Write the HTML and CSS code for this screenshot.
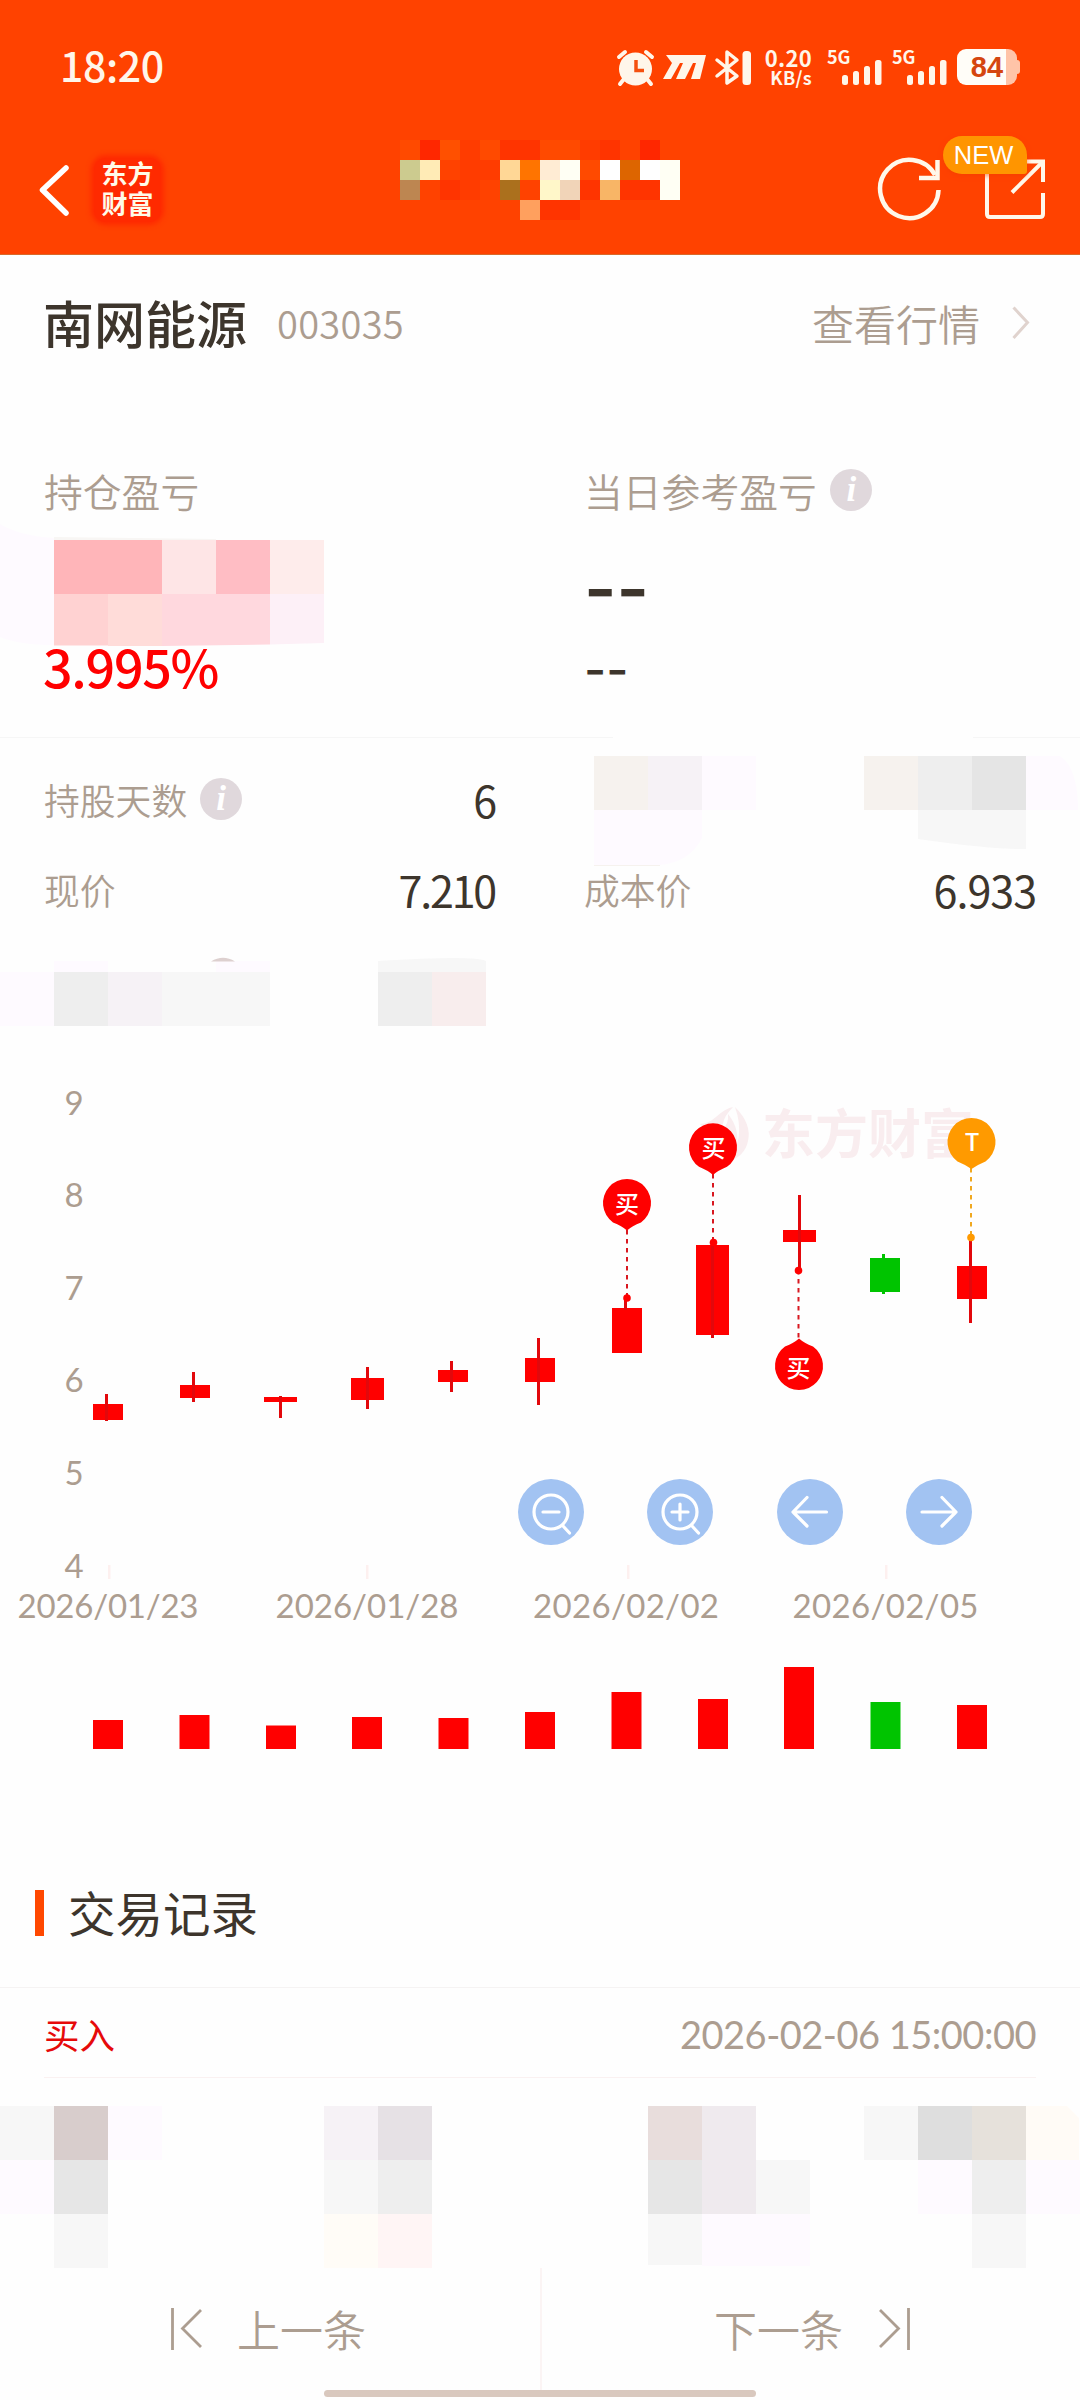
FILE: index.html
```html
<!DOCTYPE html>
<html lang="zh-CN">
<head>
<meta charset="utf-8">
<title>持仓详情</title>
<link rel="stylesheet" href="styles.css">
</head>
<body>
<main class="screen">
  <header class="header">
    <div class="status">
      <span class="clock">18:20</span>
      <div class="tray">
        <svg class="tray-icons" width="136" height="40" viewBox="617 47 136 40" fill="#fff6ea">
          <circle cx="636.500" cy="69" r="16.500"/>
          <g fill="none" stroke="#fff6ea" stroke-width="4" stroke-linecap="round">
            <path d="M620 57l6-5M653 57l-6-5M625 79l-4 5M648 79l4 5"/>
            <path d="M637 60v10.500h8" stroke="#f5500f" stroke-width="3.500" stroke-linecap="butt"/>
          </g>
          <path d="M667 55H707L701 79H692L697 63H694L686 79H677L684 63H681L672 79H664L673 63Z"/>
          <g fill="none" stroke="#fff6ea" stroke-width="3.500" stroke-linejoin="round" stroke-linecap="round">
            <path d="M718 60L738 76L728 83V52L738 60L718 76"/>
          </g>
          <rect x="743.500" y="51" width="8.500" height="34" rx="3.500"/>
        </svg>
        <div class="speed"><span class="speed-num">0.20</span><span class="speed-unit">KB/s</span></div>
        <div class="signal"><span class="net">5G</span>
          <svg width="40" height="26" viewBox="0 0 40 26" fill="#fff6ea"><rect x="0" y="15" width="6" height="10" rx="2.500"/><rect x="11" y="11" width="6" height="14" rx="2.500"/><rect x="22" y="6" width="6" height="19" rx="2.500"/><rect x="33" y="0" width="6.500" height="25" rx="2.500"/></svg>
        </div>
        <div class="signal"><span class="net">5G</span>
          <svg width="40" height="26" viewBox="0 0 40 26" fill="#fff6ea"><rect x="0" y="15" width="6" height="10" rx="2.500"/><rect x="11" y="11" width="6" height="14" rx="2.500"/><rect x="22" y="6" width="6" height="19" rx="2.500"/><rect x="33" y="0" width="6.500" height="25" rx="2.500"/></svg>
        </div>
        <div class="battery"><span>84</span></div>
      </div>
    </div>
    <nav class="navbar">
      <div class="nav-left">
        <svg width="32" height="56" viewBox="38 162 32 56" fill="none" stroke="#fff" stroke-width="5.500" stroke-linecap="round" stroke-linejoin="round"><path d="M66 168L42.500 190L66 213"/></svg>
        <div class="brand">东方<br>财富</div>
      </div>
      <svg class="title-mask" width="280" height="80" viewBox="0 0 14 4" shape-rendering="crispEdges">
        <g fill="#ff4a00"><path d="M0 0h1v1h-1zM4 0h1v1h-1zM7 0h2v1h-2zM9 1h1v1h-1z"/></g>
        <g fill="#ff3400"><path d="M5 0h2v1h-2zM10 0h1v1h-1zM2 2h1v1h-1zM9 2h1v1h-1zM11 2h2v1h-2zM7 3h2v1h-2z"/></g>
        <g fill="#ff3c00"><path d="M3 0h1v3h-1zM9 0h1v1h-1zM4 1h1v1h-1z"/></g>
        <path fill="#ff2700" d="M1 0h1v1h-1zM12 0h1v1h-1z"/>
        <path fill="#ff5000" d="M2 0h1v1h-1z"/>
        <path fill="#cccb8f" d="M0 1h1v1h-1z"/><path fill="#ffebb6" d="M1 1h1v1h-1z"/>
        <path fill="#ffd796" d="M5 1h1v1h-1z"/><path fill="#ff7400" d="M6 1h1v1h-1z"/>
        <path fill="#ffecd4" d="M7 1h1v1h-1z"/><path fill="#fffff4" d="M8 1h1v1h-1zM13 1h1v2h-1z"/>
        <path fill="#fff" d="M10 1h1v1h-1zM12 1h1v1h-1z"/><path fill="#dd6500" d="M11 1h1v1h-1z"/>
        <path fill="#bd8651" d="M0 2h1v1h-1z"/><path fill="#ab701d" d="M5 2h1v1h-1z"/>
        <path fill="#fff7c9" d="M7 2h1v1h-1z"/><path fill="#f1d4b8" d="M8 2h1v1h-1z"/>
        <path fill="#f8b566" d="M10 2h1v1h-1z"/><path fill="#ffa05e" d="M6 3h1v1h-1z"/>
      </svg>
      <div class="nav-right">
        <svg width="64" height="66" viewBox="876 156 64 66" fill="none" stroke="#fff8ea" stroke-width="4.500"><path d="M937.500 190A29.200 29.200 0 1 1 934 175"/><path d="M936.500 160V178H918"/></svg>
        <div class="share">
          <svg width="62" height="62" viewBox="985 158 62 62" fill="none" stroke="#fff8ea" stroke-width="4"><path d="M987 170V214Q987 217 990 217H1040Q1043 217 1043 214V193"/><path d="M1024 161.500H1043V182"/><path d="M1012 192.500L1042 162.500"/></svg>
          <span class="badge">NEW</span>
        </div>
      </div>
    </nav>
  </header>

  <section class="stock">
    <h1 class="stock-name">南网能源</h1>
    <span class="stock-code">003035</span>
    <a class="quote">查看行情</a>
    <svg class="quote-arrow" width="18" height="36" viewBox="0 0 18 36" fill="none" stroke="#e0d3ce" stroke-width="3"><path d="M1.500 2.500L15.500 17.500L1.500 33"/></svg>
  </section>

  <section class="pnl">
    <div class="pnl-cell">
      <div class="pnl-label">持仓盈亏</div>
      <div class="pnl-value"></div>
      <div class="pnl-rate">3.995%</div>
    </div>
    <div class="pnl-cell">
      <div class="pnl-label">当日参考盈亏 <i class="info">i</i></div>
      <div class="pnl-value dash-big">--</div>
      <div class="dash-small">--</div>
    </div>
    <svg class="mask" width="1080" height="342" viewBox="0 395 1080 342">
      <path fill="#fefaff" d="M0 524Q20 536 54 538V645Q20 645 0 637Z"/>
      <path fill="#f8f6f4" d="M54 537L216 539V541H54Z"/>
      <path fill="#ffb5b9" d="M54 540h108v54H54z"/><path fill="#fee5e6" d="M162 540h54v54h-54z"/><path fill="#ffbdc4" d="M216 540h54v54h-54z"/><path fill="#feeceb" d="M270 540h54v54h-54z"/>
      <path fill="#ffd2d2" d="M54 594h54v51.500H54z"/><path fill="#ffdcd9" d="M108 594h54v52h-54z"/><path fill="#ffd8de" d="M162 594h108v50.500l-108 1.500z"/><path fill="#fdf0f7" d="M270 594h54v49l-54 1.500z"/>
    </svg>
  </section>

  <section class="details">
    <div class="detail"><span class="detail-label">持股天数 <i class="info">i</i></span><span class="detail-value">6</span></div>
    <div class="detail"></div>
    <div class="detail"><span class="detail-label">现价</span><span class="detail-value tight">7.210</span></div>
    <div class="detail"><span class="detail-label">成本价</span><span class="detail-value">6.933</span></div>
    <svg class="mask" width="1080" height="302" viewBox="0 737 1080 302">
      <path fill="#f6f2ee" d="M594 756h54v54h-54zM864 756h54v54h-54zM594 864h66v2h-66z"/>
      <path fill="#f6f2f6" d="M648 756h54v54h-54zM108 972h54v54h-54z"/>
      <path fill="#fefaff" d="M702 756h54v54h-54zM1026 756h34Q1078 768 1078 810h-52zM594 810h108v28Q690 862 660 865H594zM0 972h54v54H0zM54 961h54v11H54zM216 961h54v11h-54z"/>
      <path fill="#eeeeee" d="M918 756h54v54h-54zM54 972h54v54H54zM378 972h54v54h-54z"/>
      <path fill="#e5e5e5" d="M972 756h54v54h-54z"/>
      <path fill="#f7f7f7" d="M918 810h108v39Q995 850 918 839zM162 972h108v54H162zM378 961Q475 955 486 961V972H378z"/>
      <path fill="#f8eded" d="M432 972h54v54h-54z"/>
      <path fill="#ddd0cf" d="M211 961.500Q223 954 235 961.500z"/>
    </svg>
  </section>

  <svg class="chart" width="1080" height="720" viewBox="0 1040 1080 720">
    <g class="wm">
      <path d="M700 1124Q708 1124 716 1117Q726 1108 733 1107Q724 1116 723 1124L712 1134ZM735 1107Q752 1124 748 1141Q745 1156 728 1162Q746 1138 735 1107ZM728 1114Q741 1130 736 1150L726 1158L722 1130Q729 1124 728 1114Z"/>
      <text x="762" y="1154" textLength="212">东方财富</text>
    </g>
    <g class="axis">
      <text x="64.500" y="1115">9</text><text x="64.500" y="1207">8</text><text x="64.500" y="1300">7</text><text x="64.500" y="1392">6</text><text x="64.500" y="1485">5</text><text x="64.500" y="1578">4</text>
      <text x="17.500" y="1618" textLength="181">2026/01/23</text><text x="275.500" y="1618" textLength="183">2026/01/28</text><text x="533" y="1618" textLength="186">2026/02/02</text><text x="792.500" y="1618" textLength="186">2026/02/05</text>
    </g>
    <path fill="#fdf0ef" d="M108 1565h2.500v14h-2.500zM366 1565h2.500v14h-2.500zM627 1565h2.500v14h-2.500zM885 1565h2.500v14h-2.500z"/>
    <g class="up">
      <path d="M93 1404h30v16H93zM180 1385h30v13h-30zM264 1397h33v5h-33zM351 1378h33v22h-33zM438 1370h30v12h-30zM525 1358h30v24h-30zM612 1308h30v45h-30zM696 1245h33v90h-33zM783 1230h33v12h-33zM957 1266h30v33h-30z"/>
      <path class="wick" d="M106.500 1394v27M193.500 1372v30M280.500 1396v22M367.500 1367v42M451.500 1361v31M538.500 1338v67M625.500 1298v12M712.500 1243v95M799.500 1195v75M970.500 1240v83"/>
    </g>
    <g class="down"><path d="M870 1258h30v34h-30z"/><path class="wick" d="M883.500 1254v40"/></g>

    <g class="pin">
      <path class="lead" d="M627 1230V1298M713 1174V1242M798.500 1270V1339"/>
      <circle cx="627" cy="1298" r="3.800"/><circle cx="713.500" cy="1242.500" r="3.800"/><circle cx="798.500" cy="1270.500" r="3.800"/>
      <path d="M627 1230.500Q622 1226 613 1222.500A24 24 0 1 1 641 1222.500Q632 1226 627 1230.500Z"/>
      <path d="M713 1175Q708 1170.500 699 1166.800A24 24 0 1 1 727 1166.800Q718 1170.500 713 1175Z"/>
      <path d="M799 1338.500Q804 1343 813 1346.500A24 24 0 1 1 785 1346.500Q794 1343 799 1338.500Z"/>
      <text x="627" y="1213">买</text><text x="713.500" y="1157">买</text><text x="798.500" y="1377">买</text>
    </g>
    <g class="pin tpin">
      <path class="lead" d="M971 1168V1237"/><circle cx="971" cy="1237.500" r="3.800"/>
      <path d="M971.500 1169Q966 1165 957.500 1161.500A24 24 0 1 1 985.500 1161.500Q977 1165 971.500 1169Z"/>
      <text x="972" y="1151">T</text>
    </g>

    <g fill="#a2c3f2"><circle cx="551" cy="1512" r="33"/><circle cx="680" cy="1512" r="33"/><circle cx="810" cy="1512" r="33"/><circle cx="939" cy="1512" r="33"/></g>
    <g fill="none" stroke="#fff" stroke-width="3.200" stroke-linecap="round" stroke-linejoin="round">
      <circle cx="551" cy="1512" r="17"/><path d="M563 1526L569.500 1533M543 1512h16"/>
      <circle cx="680" cy="1512" r="17"/><path d="M692 1526L698.500 1533M672 1512h16M680 1504v16"/>
      <path d="M826.500 1512H793M807 1497.500L793 1512L807 1526"/>
      <path d="M922 1512H956M942 1497.500L956 1512L942 1526"/>
    </g>

    <g class="up"><path d="M93 1720h30v29H93zM179.500 1715h30v34h-30zM266 1725.500h30v23.500h-30zM352 1717h30v32h-30zM438.500 1718h30v31h-30zM525 1712h30v37h-30zM611.500 1692h30v57h-30zM698 1699h30v50h-30zM784 1667h30v82h-30zM957 1705h30v44h-30z"/></g>
    <g class="down"><path d="M870.500 1702h30v47h-30z"/></g>
  </svg>

  <section class="records">
    <h2 class="records-title">交易记录</h2>
    <div class="record-head"><span class="side">买入</span><time class="time">2026-02-06 15:00:00</time></div>
    <svg class="record-mask" width="1080" height="190" viewBox="0 2078 1080 190">
      <path fill="#f7f7f7" d="M0 2106h54v54H0zM864 2106h54v54h-54zM324 2160h54v54h-54zM756 2160h54v54h-54zM54 2214h54v54H54zM648 2214h54v51h-54zM972 2214h54v54h-54z"/>
      <path fill="#fefaff" d="M108 2106h54v54h-54zM0 2160h54v54H0zM918 2160h54v54h-54zM1026 2160h54v54h-54zM702 2214h108v52H702z"/>
      <path fill="#d8cdcc" d="M54 2106h54v54H54z"/><path fill="#f6f2f6" d="M324 2106h54v54h-54z"/><path fill="#e6e1e5" d="M378 2106h54v54h-54z"/>
      <path fill="#e8dddc" d="M648 2106h54v54h-54z"/><path fill="#efeaee" d="M702 2106h54v108h-54z"/><path fill="#dedede" d="M918 2106h54v54h-54z"/>
      <path fill="#e6e1db" d="M972 2106h54v54h-54z"/><path fill="#fffbf6" d="M1026 2106h41l12 12v42h-53z"/>
      <path fill="#e6e6e6" d="M54 2160h54v54H54zM648 2160h54v54h-54z"/><path fill="#eeeeee" d="M378 2160h54v54h-54zM972 2160h54v54h-54z"/>
      <path fill="#fffcf7" d="M324 2214h54v54h-54z"/><path fill="#fff5f5" d="M378 2214h54v54h-54z"/>
    </svg>
  </section>

  <footer class="pager">
    <div class="page-link">
      <svg width="34" height="44" viewBox="170 2307 34 44" fill="none" stroke="#ac9d90" stroke-width="2.800"><path d="M172.500 2308V2350M201 2310L182.500 2328.500L201 2347"/></svg>
      <span>上一条</span>
    </div>
    <div class="page-link next">
      <span>下一条</span>
      <svg width="34" height="44" viewBox="878 2307 34 44" fill="none" stroke="#ac9d90" stroke-width="2.800"><path d="M908.500 2308V2350M880 2310L898.500 2328.500L880 2347"/></svg>
    </div>
    <div class="home-bar"></div>
  </footer>
</main>
</body>
</html>
```
FILE: styles.css
```css
* { box-sizing: border-box; }
body {
  margin: 0;
  background: #fefefe;
  font-family: "Noto Sans CJK SC", "Noto Sans", sans-serif;
  color: #3d352c;
}
svg { display: block; flex: none; }
h1, h2 { margin: 0; }
.screen { width: 1080px; height: 2400px; display: flex; flex-direction: column; overflow: hidden; }
.screen > * { flex: none; }

/* header */
.header { height: 255px; background: #ff4200; border-bottom: 1px solid #d9692a; }
.status { height: 134px; display: flex; justify-content: space-between; padding: 0 60px 0 60px; align-items: center; }
.clock { font: 500 41px/60px "Noto Sans CJK SC", sans-serif; color: #fff6ea; letter-spacing: -0.4px; margin-top: -6px; }
.tray { display: flex; align-items: center; height: 40px; }
.tray-icons { margin-right: 13px; }
.speed { width: 48px; display: flex; flex-direction: column; align-items: flex-end; color: #fff6ea; font-weight: 700; margin: -1px 15px 0 -1px; }
.speed-num { font-size: 22px; line-height: 21px; letter-spacing: 0.3px; }
.speed-unit { font-size: 18px; line-height: 18px; letter-spacing: 0.3px; }
.signal { width: 55px; height: 38px; margin-right: 10px; display: flex; align-items: flex-end; position: relative; justify-content: flex-end; }
.net { position: absolute; left: 0; top: -1px; font: 700 18px/18px "Noto Sans CJK SC", sans-serif; color: #fff6ea; }
.battery {
  width: 60px; height: 36px; border-radius: 9px; position: relative;
  background: linear-gradient(90deg, #fffdf8 49px, #ffc4a8 49px);
  display: flex; justify-content: center; align-items: center;
  font: 700 29px/36px "Liberation Sans", sans-serif; color: #d5460f; margin-right: 3px;
}
.battery::after { content: ""; position: absolute; right: -3px; top: 11px; width: 4px; height: 14px; border-radius: 0 3px 3px 0; background: #ffc4a8; }
.navbar { height: 120px; display: grid; grid-template-columns: 400px 280px 1fr; }
.nav-left { display: flex; padding: 28px 0 0 38px; gap: 24px; }
.brand {
  width: 67px; height: 64px; border-radius: 12px; background: #ff2a00; box-shadow: 0 0 5px 3px #ff2a00;
  color: #fffbe8; font: 700 26px/30px "Noto Sans CJK SC", sans-serif; text-align: center; margin-top: -4px;
}
.title-mask { margin-top: 6px; }
.nav-right { display: flex; justify-content: flex-end; padding: 22px 33px 0 0; gap: 44px; }
.share { position: relative; width: 62px; padding-top: 2px; }
.badge {
  position: absolute; left: -42px; top: -20px; width: 84px; height: 38px; border-radius: 19px 19px 3px 19px;
  background: #ff9500; color: #fff; font: 400 25.500px/39px "Liberation Sans", sans-serif; text-align: center; padding-right: 3px;
  box-shadow: 0 2px 5px #f03c0088;
}

/* stock row */
.stock { height: 140px; display: flex; align-items: center; padding: 0 50px 0 43px; }
.stock > * { margin-top: -6px; }
.stock .stock-name { font-size: 51px; font-weight: 500; line-height: 70px; }
.stock-code { font-size: 38px; font-weight: 350; color: #ac9d90; margin-left: 30px; letter-spacing: 0.3px; flex: 1; }
.quote { font-size: 42px; font-weight: 350; color: #ac9d90; margin-right: 32px; }
.stock .quote-arrow { margin-top: -5px; }

/* profit and loss */
.pnl, .details { position: relative; display: grid; grid-template-columns: 452px 452px; column-gap: 88px; padding: 0 44px; }
.pnl { height: 342px; }
.mask { position: absolute; left: 0; top: 0; }
.pnl-cell { display: flex; flex-direction: column; padding-top: 65px; }
.pnl-label { height: 60px; display: flex; align-items: center; font-size: 38.800px; font-weight: 350; color: #ac9d90; white-space: pre; }
.pnl-value { height: 120px; }
.pnl-rate { font-size: 52px; line-height: 60px; font-weight: 500; color: #f00; letter-spacing: -1.300px; margin: -4px 0 0 -1px; position: relative; z-index: 1; }
.dash-big { font: 600 70px/120px Inter, sans-serif; padding-top: 9px; }
.dash-small { font: 500 48px/60px Inter, sans-serif; margin-top: 0; }
.info {
  width: 42px; height: 42px; border-radius: 50%; background: #e0d8dc; color: #fff;
  font: italic 700 35px/42px "Liberation Serif", serif; text-align: center; margin-left: 5px; display: inline-block;
}

/* details */
.details { height: 303px; grid-auto-rows: 90px; padding-top: 17px; background: linear-gradient(90deg, #f6f6f6 613px, transparent 613px 973px, #f6f6f6 973px) 0 0 / 100% 1px no-repeat; }
.detail { display: flex; justify-content: space-between; align-items: center; }
.detail-label { display: flex; align-items: center; font-size: 35.800px; font-weight: 350; color: #ac9d90; white-space: pre; }
.detail-value { font-size: 43px; letter-spacing: -1px; }
.detail-value.tight { letter-spacing: -2.200px; margin-right: 1px; }

/* chart */
.axis text { font: 400 33px Lato, "Noto Sans", sans-serif; fill: #ac9d90; }
.up { fill: #f00; }
.up .wick { stroke: #e2080c; }
.down { fill: #00c400; }
.down .wick { stroke: #00c400; }
.wick { stroke-width: 3px; fill: none; }
.wm { fill: #f9edef; font: 700 53px "Noto Sans CJK SC", sans-serif; }
.pin { fill: #f00; }
.pin .lead { stroke: #d81820; stroke-width: 2px; stroke-dasharray: 4.500 4.500; fill: none; }
.pin text { fill: #fff; font: 500 24px "Noto Sans CJK SC", sans-serif; text-anchor: middle; }
.tpin { fill: #ff9a00; }
.tpin .lead { stroke: #f0a820; }

/* records */
.records { height: 508px; display: flex; flex-direction: column; }
.records-title { height: 228px; padding: 120px 0 0 68px; font-size: 47.500px; font-weight: 400; line-height: 64px; position: relative; border-bottom: 1px solid #f5f3f3; }
.records-title::before { content: ""; position: absolute; left: 35px; top: 130px; width: 9px; height: 46px; background: #ff4800; }
.record-head { height: 90px; margin: 0 44px; display: flex; justify-content: space-between; align-items: center; border-bottom: 1px solid #faf1f1; }
.side { font-size: 35.500px; color: #e60a0a; margin-top: 1px; }
.time { font: 400 38px/56px Lato, "Noto Sans", sans-serif; color: #ac9d90; letter-spacing: -0.500px; margin-top: 2px; }

/* pager */
.pager { height: 132px; position: relative; display: grid; grid-template-columns: 540px 540px; background: linear-gradient(#fbf4f4, #fbf4f4) 540px 0 / 2px 122px no-repeat; }
.page-link { display: flex; align-items: flex-start; padding: 39px 0 0 170px; gap: 33px; font-size: 43px; font-weight: 350; color: #ac9d90; line-height: 44px; }
.page-link span { margin-top: -1px; }
.page-link.next { padding-left: 174px; gap: 35px; }
.home-bar { position: absolute; left: 324px; top: 122px; width: 432px; height: 7px; border-radius: 4px; background: #d9c8be; }
```
